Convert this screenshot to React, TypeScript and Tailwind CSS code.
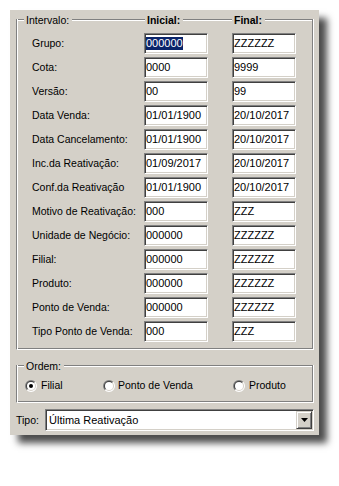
import React from 'react'

const rows = [
  { label: 'Grupo:', from: '000000', to: 'ZZZZZZ', selected: true },
  { label: 'Cota:', from: '0000', to: '9999' },
  { label: 'Versão:', from: '00', to: '99' },
  { label: 'Data Venda:', from: '01/01/1900', to: '20/10/2017' },
  { label: 'Data Cancelamento:', from: '01/01/1900', to: '20/10/2017' },
  { label: 'Inc.da Reativação:', from: '01/09/2017', to: '20/10/2017' },
  { label: 'Conf.da Reativação', from: '01/01/1900', to: '20/10/2017' },
  { label: 'Motivo de Reativação:', from: '000', to: 'ZZZ' },
  { label: 'Unidade de Negócio:', from: '000000', to: 'ZZZZZZ' },
  { label: 'Filial:', from: '000000', to: 'ZZZZZZ' },
  { label: 'Produto:', from: '000000', to: 'ZZZZZZ' },
  { label: 'Ponto de Venda:', from: '000000', to: 'ZZZZZZ' },
  { label: 'Tipo Ponto de Venda:', from: '000', to: 'ZZZ' },
]

// etched horizontal rule used on group box tops
function Line({ className = '' }: { className?: string }) {
  return <div className={`h-0 border-t border-b border-t-[#808080] border-b-white ${className}`} />
}

function Field({ value, selected }: { value: string; selected?: boolean }) {
  return (
    <div className="w-[64px] h-[21px] bg-white border border-t-[#808080] border-l-[#808080] border-r-white border-b-white shadow-[inset_1px_1px_0_#404040,inset_-1px_-1px_0_#d4d0c8] flex items-center pl-[1px] text-[11px] leading-none">
      {selected ? (
        <span className="bg-[#0a246a] text-white py-[1px]">{value}</span>
      ) : (
        <span>{value}</span>
      )}
    </div>
  )
}

function Radio({ checked }: { checked?: boolean }) {
  return (
    <svg width="12" height="12" viewBox="0 0 12 12" className="shrink-0">
      <path d="M1.757 10.243A6 6 0 0 1 10.243 1.757Z" fill="#808080" />
      <path d="M10.243 1.757A6 6 0 0 1 1.757 10.243Z" fill="#ffffff" />
      <circle cx="6" cy="6" r="6" fill="none" />
      <path d="M2.464 9.536A5 5 0 0 1 9.536 2.464Z" fill="#404040" />
      <path d="M9.536 2.464A5 5 0 0 1 2.464 9.536Z" fill="#d4d0c8" />
      <circle cx="6" cy="6" r="4" fill="#ffffff" />
      {checked && <circle cx="6" cy="6" r="2" fill="#000000" />}
    </svg>
  )
}

export default function App() {
  return (
    <div className="w-[339px] h-[486px] bg-white pl-[10px] pt-[10px] font-['Liberation_Sans',Arial,sans-serif] text-[10.5px] text-black">
      <div className="w-[309px] h-[425px] bg-[#d4d0c8] shadow-[8px_8px_7px_rgba(0,0,0,0.7)] pt-[3px] pl-[6px] pr-[5px] pb-[4px] flex flex-col">
        {/* Intervalo group */}
        <div className="flex flex-col">
          <div className="h-[14px] flex items-center">
            <div className="w-[129px] flex items-center">
              <Line className="w-[8px]" />
              <span className="ml-[2px] mr-[3px] leading-none">Intervalo:</span>
              <Line className="flex-1" />
            </div>
            <div className="w-[87px] flex items-center">
              <span className="ml-[2px] mr-[3px] font-bold leading-none">Inicial:</span>
              <Line className="flex-1" />
            </div>
            <div className="flex-1 flex items-center">
              <span className="ml-[2px] mr-[3px] font-bold leading-none">Final:</span>
              <Line className="flex-1" />
            </div>
          </div>
          <div className="-mt-[8px] h-[331px] border-l border-r border-b border-l-[#808080] border-r-white border-b-white shadow-[inset_1px_0_0_white,inset_-1px_-1px_0_#808080] pl-[15px] pt-[14px] flex flex-col gap-[3px]">
            {rows.map((r, i) => (
              <div key={i} className="flex items-center">
                <span className="w-[112px] leading-none">{r.label}</span>
                <Field value={r.from} selected={r.selected} />
                <div className="w-[24px]" />
                <Field value={r.to} />
              </div>
            ))}
          </div>
        </div>

        {/* Ordem group */}
        <div className="flex flex-col mt-[9px]">
          <div className="h-[14px] flex items-center">
            <Line className="w-[8px]" />
            <span className="ml-[2px] mr-[3px] leading-none">Ordem:</span>
            <Line className="flex-1" />
          </div>
          <div className="-mt-[8px] h-[38px] border-l border-r border-b border-l-[#808080] border-r-white border-b-white shadow-[inset_1px_0_0_white,inset_-1px_-1px_0_#808080] pl-[8px] pt-[14px] flex">
            <div className="w-[78px] h-[13px] flex items-center gap-[4px]">
              <Radio checked />
              <span className="leading-none">Filial</span>
            </div>
            <div className="w-[130px] h-[13px] flex items-center gap-[3px]">
              <Radio />
              <span className="leading-none">Ponto de Venda</span>
            </div>
            <div className="h-[13px] flex items-center gap-[4px]">
              <Radio />
              <span className="leading-none">Produto</span>
            </div>
          </div>
        </div>

        {/* Tipo */}
        <div className="mt-[6px] flex items-center">
          <span className="w-[29px] leading-none">Tipo:</span>
          <div className="flex-1 h-[22px] bg-white border border-t-[#808080] border-l-[#808080] border-r-white border-b-white shadow-[inset_1px_1px_0_#404040,inset_-1px_-1px_0_#d4d0c8] flex items-center p-[1px]">
            <span className="flex-1 pl-[2px] text-[11px] leading-none">Última Reativação</span>
            <div className="w-[16px] h-[18px] bg-[#d4d0c8] border border-t-[#d4d0c8] border-l-[#d4d0c8] border-r-[#404040] border-b-[#404040] shadow-[inset_1px_1px_0_white,inset_-1px_-1px_0_#808080] flex items-center justify-center">
              <svg width="7" height="4" viewBox="0 0 7 4">
                <path d="M0 0h7l-3.5 4z" fill="#000" />
              </svg>
            </div>
          </div>
        </div>
      </div>
    </div>
  )
}
